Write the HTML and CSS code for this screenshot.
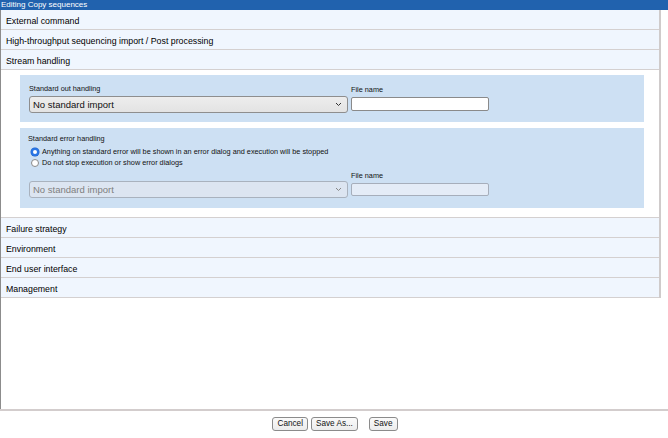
FILE: index.html
```html
<!DOCTYPE html>
<html>
<head>
<meta charset="utf-8">
<link rel="stylesheet" href="styles.css">
</head>
<body>
<div class="page">
  <div class="titlebar">Editing Copy sequences</div>
  <div class="main">
    <div class="accordion">
      <div class="acc-head">External command</div>
      <div class="acc-head">High-throughput sequencing import / Post processing</div>
      <div class="acc-head">Stream handling</div>
      <div class="acc-body">
        <div class="panel panel-out">
          <div class="field-row">
            <div class="field">
              <div class="label">Standard out handling</div>
              <div class="select"><span>No standard import</span><span class="chev"><svg width="7" height="5" viewBox="0 0 7 5"><path d="M1 1l2.5 2.5L6 1" fill="none" stroke="#333" stroke-width="1"/></svg></span></div>
            </div>
            <div class="field">
              <div class="label">File name</div>
              <div class="input"></div>
            </div>
          </div>
        </div>
        <div class="panel panel-err">
          <div class="label err-label">Standard error handling</div>
          <label class="radio-row first"><span class="radio checked"></span>Anything on standard error will be shown in an error dialog and execution will be stopped</label>
          <label class="radio-row"><span class="radio"></span>Do not stop execution or show error dialogs</label>
          <div class="field-row err-row">
            <div class="field">
              <div class="select disabled"><span>No standard import</span><span class="chev"><svg width="7" height="5" viewBox="0 0 7 5"><path d="M1 1l2.5 2.5L6 1" fill="none" stroke="#888" stroke-width="1"/></svg></span></div>
            </div>
            <div class="field">
              <div class="label">File name</div>
              <div class="input disabled"></div>
            </div>
          </div>
        </div>
      </div>
      <div class="acc-head low">Failure strategy</div>
      <div class="acc-head low">Environment</div>
      <div class="acc-head low">End user interface</div>
      <div class="acc-head low">Management</div>
    </div>
  </div>
  <div class="footer">
    <button class="btn">Cancel</button>
    <button class="btn">Save As...</button>
    <button class="btn btn-save">Save</button>
  </div>
</div>
</body>
</html>
```
FILE: styles.css
```css
* { box-sizing: border-box; }
html, body { margin: 0; padding: 0; background: #fff; }
body { font-family: "Liberation Sans", Arial, sans-serif; color: #000; }
.page { width: 668px; height: 438px; display: flex; flex-direction: column; }
.titlebar {
  height: 10px; background: #2162ae; color: #fff;
  font-size: 8px; line-height: 10px; padding-left: 1px; white-space: nowrap;
}
.main { flex: 1; border-left: 1px solid #8c8c8c; }
.accordion { width: 660px; border-right: 2px solid #cfcbcb; }
.acc-head {
  height: 20px; line-height: 16px; padding-top: 3px; background: #f0f6fe;
  border-bottom: 1px solid #d4d0d0; font-size: 8.8px; padding-left: 5px;
}
.acc-head.low { height: 19.9px; padding-top: 3px; }
.acc-body {
  background: #fff; border-bottom: 1px solid #d4d0d0;
  padding: 5px 15px 9px 19px;
}
.panel { background: #cde0f3; padding: 0 9px; }
.panel-out { height: 47px; padding-top: 9px; }
.panel-err { height: 80px; margin-top: 6px; padding-top: 6px; padding-left: 8px; }
.label { font-size: 7.3px; line-height: 9px; height: 9px; color: #111; white-space: nowrap; }
.field-row { display: flex; align-items: flex-end; gap: 3px; }
.field .label { margin-bottom: 3px; }
.panel-err .field-row { margin-left: 1px; }
.select {
  width: 319px; height: 17px; border: 1px solid #8e8e8e; border-radius: 3px;
  background: linear-gradient(#ededed, #e3e3e3); display: flex; align-items: center;
  justify-content: space-between; padding: 0 5px 0 3px;
  font-family: "Liberation Sans", Arial, sans-serif; font-size: 9.5px; color: #111;
}
.select .chev { display: flex; align-items: center; }
.select.disabled { background: #dce5f1; border-color: #a9b2be; color: #808080; }
.input {
  width: 138px; height: 14px; border: 1px solid #8a8a8a; border-radius: 2px;
  background: #fff; margin-bottom: 2px;
}
.input.disabled { background: #e4ecf7; border-color: #a6aebb; height: 13px; margin-bottom: 2px; }
.radio-row {
  display: flex; align-items: center; font-size: 7.3px; height: 11px; line-height: 11px;
  padding-left: 3px; color: #111; white-space: nowrap;
}
.radio-row.first { margin-top: 3px; }
.radio {
  width: 8px; height: 8px; border-radius: 50%; border: 1px solid #8a8a8a;
  background: #fff; margin-right: 3px; flex: none;
}
.radio.checked { border: 2.5px solid #2b76e5; background: #fff; box-shadow: 0 0 0 0.5px #1a5fc8; }
.err-row { margin-top: 3px; }
.footer {
  height: 29px; border-top: 2px solid #d3cdcd; display: flex; justify-content: center;
  align-items: flex-start; padding-top: 6px; gap: 3px; padding-left: 2px;
}
.btn {
  font-family: "Liberation Sans", Arial, sans-serif; font-size: 8.2px;
  height: 14px; padding: 0 4px; border: 1px solid #8b8b8b; border-radius: 3px;
  background: linear-gradient(#fafafa, #ececec); color: #111; line-height: 12px;
}
.btn-save { margin-left: 8px; }
```
